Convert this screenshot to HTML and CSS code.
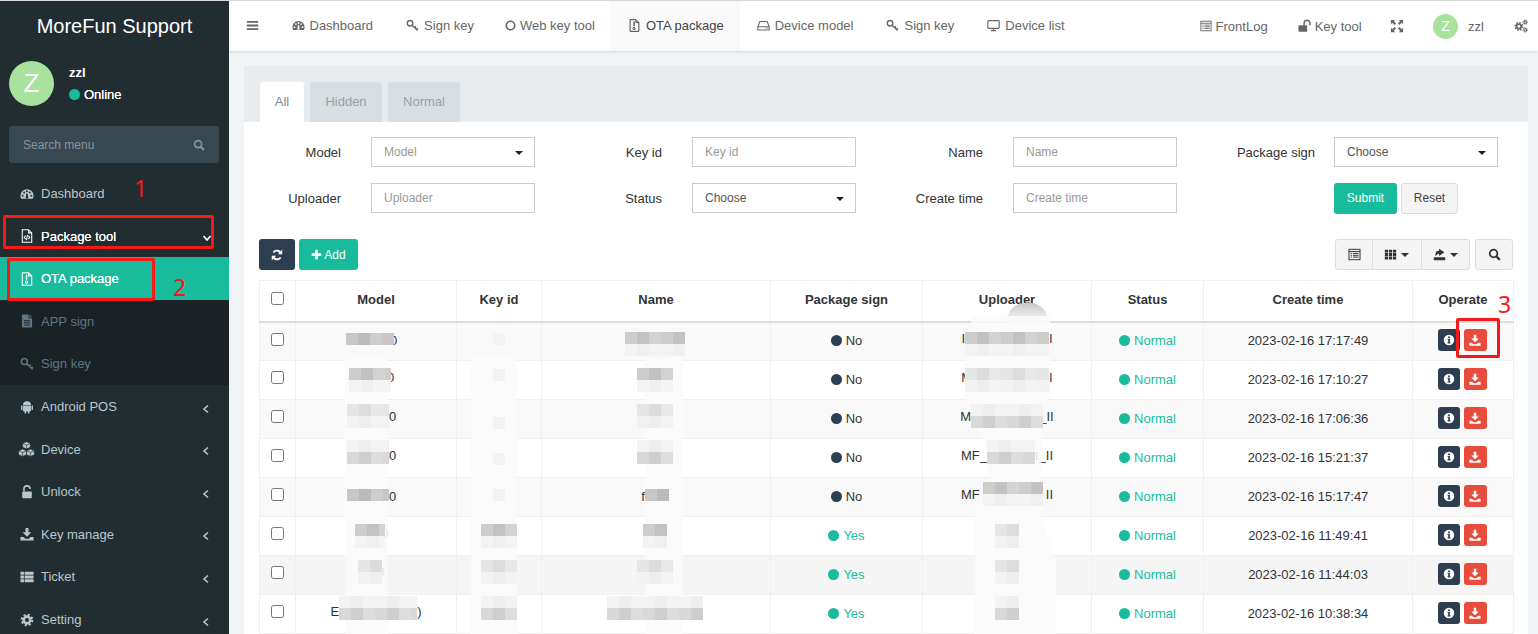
FILE: index.html
```html
<!DOCTYPE html>
<html lang="en">
<head>
    <meta charset="UTF-8">
    <title>OTA package - MoreFun Support</title>
    <link rel="stylesheet" href="styles.css">
</head>
<body>
    <svg class="sprite" xmlns="http://www.w3.org/2000/svg">
        <symbol id="i-bars" viewBox="0 0 16 16"><path d="M1 2.5h14v2.2H1zM1 6.9h14v2.2H1zM1 11.3h14v2.2H1z"/></symbol>
        <symbol id="i-dash" viewBox="0 0 16 16"><path fill-rule="evenodd" d="M8 2.5A7.5 7.5 0 0 0 .5 10c0 1.4.4 2.6 1 3.5h13c.6-.9 1-2.1 1-3.5A7.5 7.5 0 0 0 8 2.5zM3 8.9a1.1 1.1 0 1 0 0 2.2 1.1 1.1 0 1 0 0-2.2zM4.8 5.1a1.1 1.1 0 1 0 0 2.2 1.1 1.1 0 1 0 0-2.2zM8 3.8A1.1 1.1 0 1 0 8 6a1.1 1.1 0 1 0 0-2.2zM11.2 5.1a1.1 1.1 0 1 0 0 2.2 1.1 1.1 0 1 0 0-2.2zM13 8.9a1.1 1.1 0 1 0 0 2.2 1.1 1.1 0 1 0 0-2.2zM7.2 7.5L6.8 11a1.4 1.4 0 1 0 2.4 0l-.5-3.5z"/></symbol>
        <symbol id="i-key" viewBox="0 0 16 16"><g fill="none" stroke="currentColor" stroke-width="1.7"><circle cx="5" cy="5.2" r="3.4"/><path d="M7.4 7.6l7 6.4M10.6 10.6l1.9-1.7M13 12.8l1.6-1.4"/></g></symbol>
        <symbol id="i-circle" viewBox="0 0 16 16"><circle cx="8" cy="8" r="6.2" fill="none" stroke="currentColor" stroke-width="2.4"/></symbol>
        <symbol id="i-file-ota" viewBox="0 0 16 16"><g fill="none" stroke="currentColor" stroke-width="1.2"><path d="M2.6.8h7.2l3.6 3.6v10.8H2.6zM9.8.8v3.6h3.6"/><path d="M7.5 3v6" stroke-width="1.6"/><circle cx="7.5" cy="11.6" r="1.4"/></g></symbol>
        <symbol id="i-file-code" viewBox="0 0 16 16"><g fill="none" stroke="currentColor" stroke-width="1.2"><path d="M2.6.8h7.2l3.6 3.6v10.8H2.6zM9.8.8v3.6h3.6"/><path d="M6.4 7.6L4.8 9.6l1.6 2M9.6 7.6l1.6 2-1.6 2M8.6 6.8l-1.2 5.8"/></g></symbol>
        <symbol id="i-file-text" viewBox="0 0 16 16"><path fill-rule="evenodd" d="M2.2.5h7.600v4.300h4v10.700H2.200zM10.800.7l2.800 3H10.800zM4.500 7v1.200h7V7zM4.500 9.500v1.200h7V9.500zM4.500 12v1.200h7V12z"/></symbol>
        <symbol id="i-hdd" viewBox="0 0 16 16"><g fill="none" stroke="currentColor" stroke-width="1.3"><path d="M1 9.500L3.500 3h9L15 9.500V13.500H1zM1 9.500h14"/><path d="M10.500 11.500h1M12.800 11.500h1"/></g></symbol>
        <symbol id="i-desktop" viewBox="0 0 16 16"><g fill="none" stroke="currentColor" stroke-width="1.4"><rect x="1" y="2" width="14" height="9.500" rx="1"/><path d="M8 11.500V14M4.800 14.300h6.400"/></g></symbol>
        <symbol id="i-log" viewBox="0 0 16 16"><g fill="none" stroke="currentColor" stroke-width="1.2"><rect x="1.200" y="1.600" width="13.600" height="12.800"/><path d="M1.200 4.400h13.600M3.200 6.800h1.600M6 6.800h7M3.200 9h1.600M6 9h7M3.200 11.200h1.600M6 11.200h7"/></g></symbol>
        <symbol id="i-unlock" viewBox="0 0 16 16"><rect x="0.500" y="7" width="10" height="7.500" rx="1"/><path d="M7 7.500V4.700a3.300 3.300 0 0 1 6.600 0V7" fill="none" stroke="currentColor" stroke-width="1.700"/></symbol>
        <symbol id="i-lock-open" viewBox="0 0 16 16"><rect x="2.500" y="7.500" width="11" height="7.500" rx="1"/><path d="M4.500 7.500V4.500a3.500 3.500 0 0 1 7 0" fill="none" stroke="currentColor" stroke-width="1.800"/></symbol>
        <symbol id="i-expand" viewBox="0 0 16 16"><path d="M1 1h5L4.400 2.600 6.900 5.100 5.100 6.900 2.600 4.400 1 6zM15 1v5L13.400 4.400 10.900 6.900 9.100 5.100 11.600 2.600 10 1zM1 15v-5l1.600 1.600 2.500-2.500 1.800 1.800-2.500 2.500L6 15zM15 15h-5l1.600-1.600-2.500-2.500 1.800-1.800 2.500 2.500L15 10z"/></symbol>
        <symbol id="i-cog" viewBox="0 0 16 16"><g fill="none" stroke="currentColor"><circle cx="8" cy="8" r="3.800" stroke-width="3"/><circle cx="8" cy="8" r="6" stroke-width="2.400" stroke-dasharray="2.400 2.310"/></g></symbol>
        <symbol id="i-cogs" viewBox="0 0 16 16"><g fill="none" stroke="currentColor"><circle cx="5.500" cy="8.500" r="2.600" stroke-width="2"/><circle cx="5.500" cy="8.500" r="4.300" stroke-width="1.800" stroke-dasharray="1.700 1.670"/><circle cx="12.800" cy="3.600" r="1.500" stroke-width="1.300"/><circle cx="12.800" cy="3.600" r="2.600" stroke-width="1" stroke-dasharray="1 1.040"/><circle cx="12.800" cy="12.400" r="1.500" stroke-width="1.300"/><circle cx="12.800" cy="12.400" r="2.600" stroke-width="1" stroke-dasharray="1 1.040"/></g></symbol>
        <symbol id="i-android" viewBox="0 0 16 16"><path d="M3.500 6.300h9V12a1 1 0 0 1-1 1h-.8v2.300H9V13H7v2.300H5.300V13h-.8a1 1 0 0 1-1-1zM3.500 5.600a4.500 4.300 0 0 1 9 0zM1.200 6.300h1.600v5H1.200zM13.200 6.300h1.600v5h-1.600z"/></symbol>
        <symbol id="i-cubes" viewBox="0 0 16 16"><g stroke="#222d32" stroke-width=".6"><path d="M8 .6l3.600 1.600v3.700L8 7.500 4.400 5.900V2.200z"/><path d="M4.300 7.600l3.600 1.600v3.700l-3.600 1.600L.6 12.900V9.200z"/><path d="M11.700 7.600l3.700 1.600v3.700l-3.700 1.600-3.600-1.600V9.200z"/><path d="M4.400 2.200L8 3.800l3.600-1.600M8 3.800v3.700M.6 9.200l3.700 1.600 3.600-1.600M4.300 10.800v3.700M8.100 9.200l3.600 1.600 3.700-1.600M11.700 10.800v3.700" fill="none"/></g></symbol>
        <symbol id="i-download" viewBox="0 0 16 16"><path d="M6.300 1h3.400v5H13l-5 5-5-5h3.300zM.5 11.500H4l2 2h4l2-2h3.500v4H.5z"/></symbol>
        <symbol id="i-th-list" viewBox="0 0 16 16"><path d="M.5 2h4v3.400h-4zM5.300 2h10.200v3.400H5.300zM.5 6.300h4v3.400h-4zM5.300 6.300h10.200v3.400H5.300zM.5 10.600h4V14h-4zM5.300 10.600h10.200V14H5.300z"/></symbol>
        <symbol id="i-search" viewBox="0 0 16 16"><g fill="none" stroke="currentColor"><circle cx="6.800" cy="6.800" r="4.700" stroke-width="2.200"/><path d="M10.300 10.300l4.300 4.300" stroke-width="2.700"/></g></symbol>
        <symbol id="i-refresh" viewBox="0 0 16 16"><path d="M13.500 6.500A5.800 5.800 0 0 0 3.200 4.600M2.500 9.500a5.800 5.800 0 0 0 10.300 1.900" fill="none" stroke="currentColor" stroke-width="2.600"/><path d="M15 1v6H9zM1 15V9h6z"/></symbol>
        <symbol id="i-plus" viewBox="0 0 16 16"><path d="M6 1h4v5h5v4h-5v5H6v-5H1V6h5z"/></symbol>
        <symbol id="i-info" viewBox="0 0 16 16"><path fill-rule="evenodd" d="M8 1a7 7 0 1 0 0 14A7 7 0 0 0 8 1zM6.800 3.200h2.400v2.200H6.800zM5.900 6.400h3.300v5h1v1.400H5.900v-1.400h1V7.800h-1z"/></symbol>
        <symbol id="i-th" viewBox="0 0 16 16"><path d="M1 2h4v3.400H1zM6 2h4v3.400H6zM11 2h4v3.400h-4zM1 6.300h4v3.400H1zM6 6.300h4v3.400H6zM11 6.300h4v3.400h-4zM1 10.600h4V14H1zM6 10.600h4V14H6zM11 10.600h4V14h-4z"/></symbol>
        <symbol id="i-export" viewBox="0 0 16 16"><path d="M1 11.500h14v3.500H1zM3 10.500V7.500c0-2.500 1.800-4 4.500-4V.8L14 5.300 7.500 9.800V7C5.300 7 4.200 8.500 3 10.500z"/></symbol>
    </svg>

    <div class="topline"></div>
    <div class="layout">
        <aside class="sidebar">
            <div class="logo">MoreFun Support</div>
            <div class="user-panel">
                <div class="avatar avatar-big">Z</div>
                <div class="user-info">
                    <div class="user-name">zzl</div>
                    <div class="user-status"><span class="dot dot-green"></span>Online</div>
                </div>
            </div>
            <div class="side-search">
                <span>Search menu</span>
                <svg class="icon"><use href="#i-search"/></svg>
            </div>
            <ul class="side-menu">
                <li class="side-item"><svg class="icon"><use href="#i-dash"/></svg>Dashboard</li>
                <li class="side-item is-open"><svg class="icon"><use href="#i-file-code"/></svg>Package tool
                    <svg class="chev chev-down" viewBox="0 0 10 10"><path d="M1.500 3l3.500 4 3.500-4"/></svg></li>
                <li class="side-item is-active"><svg class="icon"><use href="#i-file-ota"/></svg>OTA package</li>
                <li class="side-item is-sub"><svg class="icon"><use href="#i-file-text"/></svg>APP sign</li>
                <li class="side-item is-sub"><svg class="icon"><use href="#i-key"/></svg>Sign key</li>
                <li class="side-item"><svg class="icon"><use href="#i-android"/></svg>Android POS
                    <svg class="chev" viewBox="0 0 10 10"><path d="M7 1.500L3 5l4 3.500"/></svg></li>
                <li class="side-item"><svg class="icon icon-wide"><use href="#i-cubes"/></svg>Device
                    <svg class="chev" viewBox="0 0 10 10"><path d="M7 1.500L3 5l4 3.500"/></svg></li>
                <li class="side-item"><svg class="icon"><use href="#i-lock-open"/></svg>Unlock
                    <svg class="chev" viewBox="0 0 10 10"><path d="M7 1.500L3 5l4 3.500"/></svg></li>
                <li class="side-item"><svg class="icon"><use href="#i-download"/></svg>Key manage
                    <svg class="chev" viewBox="0 0 10 10"><path d="M7 1.500L3 5l4 3.500"/></svg></li>
                <li class="side-item"><svg class="icon"><use href="#i-th-list"/></svg>Ticket
                    <svg class="chev" viewBox="0 0 10 10"><path d="M7 1.500L3 5l4 3.500"/></svg></li>
                <li class="side-item"><svg class="icon"><use href="#i-cog"/></svg>Setting
                    <svg class="chev" viewBox="0 0 10 10"><path d="M7 1.500L3 5l4 3.500"/></svg></li>
            </ul>
        </aside>

        <main class="main">
            <nav class="navbar">
                <a class="nav-toggle"><svg class="icon"><use href="#i-bars"/></svg></a>
                <a class="nav-link"><svg class="icon"><use href="#i-dash"/></svg>Dashboard</a>
                <a class="nav-link"><svg class="icon"><use href="#i-key"/></svg>Sign key</a>
                <a class="nav-link nav-circle"><svg class="icon"><use href="#i-circle"/></svg>Web key tool</a>
                <a class="nav-link is-current"><svg class="icon"><use href="#i-file-ota"/></svg>OTA package</a>
                <a class="nav-link"><svg class="icon"><use href="#i-hdd"/></svg>Device model</a>
                <a class="nav-link"><svg class="icon"><use href="#i-key"/></svg>Sign key</a>
                <a class="nav-link"><svg class="icon"><use href="#i-desktop"/></svg>Device list</a>
                <div class="nav-right">
                    <a class="nav-link nav-log"><svg class="icon"><use href="#i-log"/></svg>FrontLog</a>
                    <a class="nav-link nav-keytool"><svg class="icon"><use href="#i-unlock"/></svg>Key tool</a>
                    <a class="nav-link nav-expand"><svg class="icon"><use href="#i-expand"/></svg></a>
                    <a class="nav-link nav-user"><span class="avatar avatar-small">Z</span>zzl</a>
                    <a class="nav-link nav-cogs"><svg class="icon"><use href="#i-cogs"/></svg></a>
                </div>
            </nav>

            <section class="content">
                <div class="panel">
                    <ul class="tabs">
                        <li class="tab is-active">All</li>
                        <li class="tab">Hidden</li>
                        <li class="tab">Normal</li>
                    </ul>
                    <div class="panel-body">
                        <form class="filter">
                            <label>Model</label>
                            <div class="select-box is-empty">Model</div>
                            <label>Key id</label>
                            <input type="text" placeholder="Key id">
                            <label>Name</label>
                            <input type="text" placeholder="Name">
                            <label class="label-last">Package sign</label>
                            <div class="select-box">Choose</div>

                            <label>Uploader</label>
                            <input type="text" placeholder="Uploader">
                            <label>Status</label>
                            <div class="select-box">Choose</div>
                            <label>Create time</label>
                            <input type="text" placeholder="Create time">
                            <span></span>
                            <div class="filter-btns">
                                <button type="button" class="btn btn-teal">Submit</button>
                                <button type="button" class="btn btn-light">Reset</button>
                            </div>
                        </form>

                        <div class="toolbar">
                            <button type="button" class="btn btn-navy btn-refresh"><svg class="icon"><use href="#i-refresh"/></svg></button>
                            <button type="button" class="btn btn-teal btn-add"><svg class="icon"><use href="#i-plus"/></svg>Add</button>
                            <div class="tool-right">
                                <div class="btn-group">
                                    <button type="button" class="btn btn-light tool-a"><svg class="icon"><use href="#i-log"/></svg></button>
                                    <button type="button" class="btn btn-light tool-b"><svg class="icon"><use href="#i-th"/></svg><span class="caret"></span></button>
                                    <button type="button" class="btn btn-light tool-b"><svg class="icon"><use href="#i-export"/></svg><span class="caret"></span></button>
                                </div>
                                <button type="button" class="btn btn-light tool-search"><svg class="icon"><use href="#i-search"/></svg></button>
                            </div>
                        </div>

                        <div class="table-wrap">
                            <table class="data-table">
                                <thead>
                                    <tr>
                                        <th><input type="checkbox"></th>
                                        <th>Model</th>
                                        <th>Key id</th>
                                        <th>Name</th>
                                        <th>Package sign</th>
                                        <th>Uploader</th>
                                        <th>Status</th>
                                        <th>Create time</th>
                                        <th>Operate</th>
                                    </tr>
                                </thead>
                                <tbody>
                                    <tr>
                                        <td><input type="checkbox"></td>
                                        <td class="td-model"><span class="mz dark w48 cover"></span>0</td>
                                        <td><span class="mz faint w12"></span></td>
                                        <td class="td-name"><span class="mz top w60"></span></td>
                                        <td><span class="dot dot-navy"></span>No</td>
                                        <td>I<span class="mz top w84"></span>I</td>
                                        <td class="is-ok"><span class="dot dot-green"></span>Normal</td>
                                        <td>2023-02-16 17:17:49</td>
                                        <td class="td-ops"><a class="op op-navy"><svg class="icon"><use href="#i-info"/></svg></a><a class="op op-red"><svg class="icon"><use href="#i-download"/></svg></a></td>
                                    </tr>
                                    <tr>
                                        <td><input type="checkbox"></td>
                                        <td class="td-model"><span class="mz top w42 cover"></span>0</td>
                                        <td><span class="mz faint w12"></span></td>
                                        <td class="td-name"><span class="mz top w36"></span></td>
                                        <td><span class="dot dot-navy"></span>No</td>
                                        <td>M<span class="mz light lap w84"></span>I</td>
                                        <td class="is-ok"><span class="dot dot-green"></span>Normal</td>
                                        <td>2023-02-16 17:10:27</td>
                                        <td class="td-ops"><a class="op op-navy"><svg class="icon"><use href="#i-info"/></svg></a><a class="op op-red"><svg class="icon"><use href="#i-download"/></svg></a></td>
                                    </tr>
                                    <tr>
                                        <td><input type="checkbox"></td>
                                        <td class="td-model"><span class="mz light w42"></span>0</td>
                                        <td><span class="mz faint w12"></span></td>
                                        <td class="td-name"><span class="mz light w36"></span></td>
                                        <td><span class="dot dot-navy"></span>No</td>
                                        <td>M<span class="mz low w72 cover"></span>_II</td>
                                        <td class="is-ok"><span class="dot dot-green"></span>Normal</td>
                                        <td>2023-02-16 17:06:36</td>
                                        <td class="td-ops"><a class="op op-navy"><svg class="icon"><use href="#i-info"/></svg></a><a class="op op-red"><svg class="icon"><use href="#i-download"/></svg></a></td>
                                    </tr>
                                    <tr>
                                        <td><input type="checkbox"></td>
                                        <td class="td-model"><span class="mz low w42"></span>0</td>
                                        <td><span class="mz faint w12"></span></td>
                                        <td class="td-name"><span class="mz low w36"></span></td>
                                        <td><span class="dot dot-navy"></span>No</td>
                                        <td>MF_<span class="mz low w48"></span>t_II</td>
                                        <td class="is-ok"><span class="dot dot-green"></span>Normal</td>
                                        <td>2023-02-16 15:21:37</td>
                                        <td class="td-ops"><a class="op op-navy"><svg class="icon"><use href="#i-info"/></svg></a><a class="op op-red"><svg class="icon"><use href="#i-download"/></svg></a></td>
                                    </tr>
                                    <tr>
                                        <td><input type="checkbox"></td>
                                        <td class="td-model"><span class="mz dark w42"></span>0</td>
                                        <td><span class="mz faint w12"></span></td>
                                        <td class="td-name">f<span class="mz dark w24"></span></td>
                                        <td><span class="dot dot-navy"></span>No</td>
                                        <td>MF<span class="mz top w60 gap"></span>II</td>
                                        <td class="is-ok"><span class="dot dot-green"></span>Normal</td>
                                        <td>2023-02-16 15:17:47</td>
                                        <td class="td-ops"><a class="op op-navy"><svg class="icon"><use href="#i-info"/></svg></a><a class="op op-red"><svg class="icon"><use href="#i-download"/></svg></a></td>
                                    </tr>
                                    <tr>
                                        <td><input type="checkbox"></td>
                                        <td class="td-model"><span class="mz top w30 cover"></span>0</td>
                                        <td><span class="mz top w36"></span></td>
                                        <td class="td-name"><span class="mz top w24"></span></td>
                                        <td class="is-ok"><span class="dot dot-green"></span>Yes</td>
                                        <td><span class="mz light w24"></span></td>
                                        <td class="is-ok"><span class="dot dot-green"></span>Normal</td>
                                        <td>2023-02-16 11:49:41</td>
                                        <td class="td-ops"><a class="op op-navy"><svg class="icon"><use href="#i-info"/></svg></a><a class="op op-red"><svg class="icon"><use href="#i-download"/></svg></a></td>
                                    </tr>
                                    <tr class="is-hover">
                                        <td><input type="checkbox"></td>
                                        <td class="td-model"><span class="mz light w24 cover"></span>J</td>
                                        <td><span class="mz light w36"></span></td>
                                        <td class="td-name"><span class="mz light w36"></span></td>
                                        <td class="is-ok"><span class="dot dot-green"></span>Yes</td>
                                        <td><span class="mz light w24"></span></td>
                                        <td class="is-ok"><span class="dot dot-green"></span>Normal</td>
                                        <td>2023-02-16 11:44:03</td>
                                        <td class="td-ops"><a class="op op-navy"><svg class="icon"><use href="#i-info"/></svg></a><a class="op op-red"><svg class="icon"><use href="#i-download"/></svg></a></td>
                                    </tr>
                                    <tr>
                                        <td><input type="checkbox"></td>
                                        <td class="td-wide">E<span class="mz low w78"></span>)</td>
                                        <td><span class="mz low w36"></span></td>
                                        <td class="td-name"><span class="mz low w96"></span></td>
                                        <td class="is-ok"><span class="dot dot-green"></span>Yes</td>
                                        <td><span class="mz low w24"></span></td>
                                        <td class="is-ok"><span class="dot dot-green"></span>Normal</td>
                                        <td>2023-02-16 10:38:34</td>
                                        <td class="td-ops"><a class="op op-navy"><svg class="icon"><use href="#i-info"/></svg></a><a class="op op-red"><svg class="icon"><use href="#i-download"/></svg></a></td>
                                    </tr>
                                </tbody>
                            </table>
                            <div class="smudge smudge-cap"></div>
                            <div class="smudge smudge-uploader"></div>
                            <div class="smudge smudge-model"></div>
                            <div class="smudge smudge-key"></div>
                            <div class="smudge smudge-name"></div>
                        </div>
                    </div>
                </div>
            </section>
        </main>
    </div>

    <!-- red marks drawn over the screenshot -->
    <div class="mark mark-box mark-box-1"></div>
    <div class="mark mark-box mark-box-2"></div>
    <div class="mark mark-box mark-box-3"></div>
    <div class="mark mark-num mark-num-1">1</div>
    <div class="mark mark-num mark-num-2">2</div>
    <div class="mark mark-num mark-num-3">3</div>
</body>
</html>
```

FILE: styles.css
```css
:root {
    --teal: #18bc9c;
    --navy: #2c3e50;
    --red: #e74c3c;
    --side-bg: #222d32;
    --side-dark: #1a2226;
    --side-text: #b8c7ce;
    --line: #f0f0f0;
    --mark: #f5191a;
}

* {
    box-sizing: border-box;
    margin: 0;
    padding: 0;
}

html,
body {
    height: 100%;
    overflow: hidden;
}

body {
    position: relative;
    display: flex;
    flex-direction: column;
    font-family: "Liberation Sans", Arial, sans-serif;
    font-size: 13px;
    color: #333;
    background: #f0f4f7;
}

ul {
    list-style: none;
}

.sprite {
    display: none;
}

.icon {
    width: 14px;
    height: 14px;
    fill: currentColor;
    flex: none;
}

.topline {
    height: 1px;
    background: #d9d9d9;
    flex: none;
}

.layout {
    display: flex;
    flex: 1;
    min-height: 0;
}

/* sidebar */
.sidebar {
    width: 229px;
    flex: none;
    background: var(--side-bg);
    color: var(--side-text);
    overflow: hidden;
}

.logo {
    height: 50px;
    line-height: 50px;
    text-align: center;
    font-size: 20px;
    color: #fff;
}

.user-panel {
    display: flex;
    align-items: center;
    padding: 10px 0 0 9px;
}

.avatar {
    display: flex;
    align-items: center;
    justify-content: center;
    border-radius: 50%;
    background: #a8e29d;
    color: #fff;
    flex: none;
}

.avatar-big {
    width: 45px;
    height: 45px;
    font-size: 26px;
}

.avatar-small {
    width: 25px;
    height: 25px;
    font-size: 14px;
    margin-right: 10px;
}

.user-info {
    margin-left: 15px;
    color: #fff;
}

.user-name {
    font-weight: bold;
    margin-bottom: 7px;
    margin-top: -1px;
}

.user-status {
    display: flex;
    align-items: center;
    text-shadow: 0 0 .5px #fff;
}

.dot {
    display: inline-block;
    width: 11px;
    height: 11px;
    border-radius: 50%;
    margin-right: 4px;
    vertical-align: -1px;
}

.dot-green {
    background: var(--teal);
}

.dot-navy {
    background: var(--navy);
}

.side-search {
    display: flex;
    align-items: center;
    justify-content: space-between;
    height: 37px;
    margin: 20px 10px 0 9px;
    padding: 0 14px;
    background: #374850;
    border-radius: 3px;
    color: #88949b;
    font-size: 12px;
}

.side-search .icon {
    width: 12px;
    height: 12px;
}

.side-menu {
    margin-top: 9.3px;
}

.side-item {
    display: flex;
    align-items: center;
    height: 42.6px;
    padding-left: 20px;
}

.side-item .icon {
    margin-right: 7px;
}

.side-item .icon-wide {
    width: 17px;
    height: 17px;
    margin-left: -2px;
    margin-right: 6px;
}

.side-item.is-open {
    color: #fff;
    text-shadow: 0 0 .6px #fff;
}

.side-item.is-active {
    background: var(--teal);
    color: #fff;
    text-shadow: 0 0 .6px #fff;
}

.side-item.is-sub {
    background: var(--side-dark);
    color: #5f7582;
}

.chev {
    width: 10px;
    height: 10px;
    margin-left: auto;
    margin-right: 18px;
    margin-top: 4px;
    fill: none;
    stroke: currentColor;
    stroke-width: 1.6;
}

.chev-down {
    margin-right: 17px;
}

/* top navbar */
.main {
    flex: 1;
    min-width: 0;
    display: flex;
    flex-direction: column;
}

.navbar {
    display: flex;
    align-items: stretch;
    height: 50px;
    flex: none;
    background: #fff;
    box-shadow: 0 1px 2px rgba(0, 0, 0, .12);
    color: #666;
    position: relative;
}

.navbar a {
    display: flex;
    align-items: center;
}

.nav-toggle {
    width: 46px;
    padding: 0 0 2px 17px;
}

.nav-toggle .icon {
    width: 13px;
    height: 13px;
}

.nav-link {
    padding: 0 16.5px 2px;
}

.nav-link .icon {
    width: 13px;
    height: 13px;
    margin-right: 5px;
}

.nav-circle {
    padding-left: 14.5px;
}

.nav-circle .icon {
    width: 11px;
    height: 11px;
    margin-right: 4px;
}

.nav-link.is-current {
    background: #f9f9f9;
    color: #444;
}

.nav-right {
    display: flex;
    margin-left: auto;
}

.nav-right .nav-link {
    padding-bottom: 0;
}

.nav-log {
    padding: 0 15px;
}

.nav-log .icon {
    width: 12px;
    height: 12px;
    margin-right: 4px;
}

.nav-keytool {
    padding: 0 15.5px 0 15px;
}

.nav-keytool .icon {
    width: 14px;
    height: 14px;
    margin-right: 3px;
}

.nav-expand {
    padding: 0 14px 0 13px;
}

.nav-expand .icon,
.nav-cogs .icon {
    margin-right: 0;
}

.nav-right .nav-expand .icon,
.nav-right .nav-cogs .icon {
    width: 14px;
    height: 14px;
}

.nav-user {
    padding: 0 15px;
}

.nav-right .nav-cogs {
    padding: 0 10px 0 15px;
}

/* content */
.content {
    flex: 1;
    min-height: 0;
    padding: 15px 10px 0 15px;
}

.panel {
    background: #fff;
    height: 100%;
}

.tabs {
    display: flex;
    gap: 6px;
    height: 56px;
    padding: 16px 0 0 16px;
    background: #e8ecef;
}

.tab {
    width: 72px;
    line-height: 40px;
    text-align: center;
    color: #9aa0a4;
    background: #d8dfe4;
    border-radius: 3px 3px 0 0;
}

.tab.is-active {
    width: 44px;
    background: #fff;
    color: #7b8a94;
}

.panel-body {
    padding: 15px;
}

.filter {
    display: grid;
    grid-template-columns: 112px 164px 157px 164px 157px 164px 157px 164px;
    grid-auto-rows: 30px;
    row-gap: 16px;
    align-items: center;
}

.filter label {
    text-align: right;
    padding-right: 30px;
}

.filter .label-last {
    padding-right: 19px;
}

.filter input[type="text"],
.select-box {
    width: 100%;
    height: 30px;
    padding: 0 12px;
    border: 1px solid #ccc;
    font-family: inherit;
    font-size: 12px;
    color: #555;
    line-height: 28px;
    background: #fff;
    outline: none;
}

.filter input::placeholder {
    color: #999;
}

.select-box {
    position: relative;
}

.select-box.is-empty {
    color: #999;
}

.select-box::after {
    content: '';
    position: absolute;
    right: 11px;
    top: 13px;
    border-top: 4px solid #222;
    border-left: 4px solid transparent;
    border-right: 4px solid transparent;
}

.filter-btns {
    display: flex;
    gap: 4px;
}

.btn {
    display: inline-flex;
    align-items: center;
    justify-content: center;
    height: 31px;
    border: 0;
    border-radius: 3px;
    font-family: inherit;
    font-size: 12px;
}

.btn-teal {
    background: var(--teal);
    color: #fff;
}

.btn-navy {
    background: var(--navy);
    color: #fff;
}

.btn-light {
    background: #f4f4f4;
    border: 1px solid #ddd;
    color: #444;
}

.filter-btns .btn-teal {
    width: 63px;
}

.filter-btns .btn-light {
    width: 57px;
}

.toolbar {
    display: flex;
    gap: 4px;
    margin-top: 26px;
}

.btn-refresh {
    width: 36px;
}

.btn-add {
    width: 59px;
}

.btn-refresh .icon {
    width: 12px;
    height: 12px;
}

.btn-add .icon {
    width: 11px;
    height: 11px;
    margin-right: 2px;
}

.tool-right {
    display: flex;
    gap: 5px;
    margin-left: auto;
    color: #333;
}

.btn-group {
    display: flex;
}

.btn-group .btn {
    border-radius: 0;
    margin-left: -1px;
    color: #333;
}

.btn-group .btn:first-child {
    border-radius: 3px 0 0 3px;
    margin-left: 0;
}

.btn-group .btn:last-child {
    border-radius: 0 3px 3px 0;
}

.tool-a {
    width: 38px;
}

.tool-b {
    width: 49.5px;
}

.tool-search {
    width: 38px;
    color: #333;
}

.tool-right .icon {
    width: 13px;
    height: 13px;
}

.caret {
    margin-left: 4px;
    border-top: 4px solid #333;
    border-left: 4px solid transparent;
    border-right: 4px solid transparent;
}

/* table */
.table-wrap {
    position: relative;
    margin-top: 10px;
}

.data-table {
    width: 1254px;
    table-layout: fixed;
    border-collapse: collapse;
    border: 1px solid var(--line);
}

.data-table th,
.data-table td {
    border: 1px solid var(--line);
    text-align: center;
    vertical-align: middle;
    white-space: nowrap;
    overflow: hidden;
}

.data-table th {
    height: 41px;
    padding-bottom: 2px;
    border-bottom: 2px solid #ddd;
}

.data-table td {
    height: 39px;
    padding: 0 0 2px;
}

.data-table th:nth-child(1) { width: 36px; }
.data-table th:nth-child(2) { width: 161px; }
.data-table th:nth-child(3) { width: 85px; }
.data-table th:nth-child(4) { width: 229px; }
.data-table th:nth-child(5) { width: 152px; }
.data-table th:nth-child(6) { width: 169px; }
.data-table th:nth-child(7) { width: 112px; }
.data-table th:nth-child(8) { width: 209px; }
.data-table th:nth-child(9) { width: 101px; }

.data-table input[type="checkbox"] {
    width: 13px;
    height: 13px;
    margin: 0 0 3px;
    vertical-align: middle;
}

.data-table tbody tr:nth-child(odd) {
    background: #f9f9f9;
}

.data-table tbody tr.is-hover {
    background: #f5f5f5;
}

.data-table td.td-model {
    padding-right: 9px;
}

.data-table td.td-name {
    padding-right: 2px;
}

.data-table td.td-ops {
    padding-right: 2px;
    font-size: 0;
}

.is-ok {
    color: var(--teal);
}

.op {
    display: inline-flex;
    align-items: center;
    justify-content: center;
    width: 22px;
    height: 22px;
    border-radius: 3px;
    color: #fff;
    vertical-align: middle;
}

.op .icon {
    width: 12px;
    height: 12px;
}

.op + .op {
    width: 23px;
    margin-left: 4px;
}

.op-navy {
    background: var(--navy);
}

.op-red {
    background: var(--red);
}

/* pixelated blur over the hidden values */
.mz {
    position: relative;
    z-index: 2;
    display: inline-block;
    vertical-align: middle;
    height: 12px;
    background-size: 36px 12px;
    background-repeat: repeat-x;
}

.mz.dark {
    background-image: linear-gradient(90deg, #c9c6c5 0 12px, #bdbabc 12px 24px, #cfcecf 24px 36px);
}

.mz.faint {
    background: #f3f3f3;
}

.mz.light {
    height: 24px;
    background-image:
        linear-gradient(90deg, #e4e5e5 0 12px, #dcdcdc 12px 24px, #e8e8e9 24px 36px),
        linear-gradient(90deg, #f2f2f2 0 12px, #eeeeee 12px 24px, #f3f3f3 24px 36px);
    background-position: 0 0, 0 12px;
}

.mz.top {
    height: 24px;
    background-image:
        linear-gradient(90deg, #cfcdcc 0 12px, #c3c1c3 12px 24px, #d3d3d4 24px 36px),
        linear-gradient(90deg, #f3f3f2 0 12px, #efefef 12px 24px, #f4f4f4 24px 36px);
    background-position: 0 0, 0 12px;
}

.mz.low {
    height: 24px;
    background-image:
        linear-gradient(90deg, #f3f3f2 0 12px, #eeeeee 12px 24px, #f3f3f3 24px 36px),
        linear-gradient(90deg, #d9d8d7 0 12px, #cfcdce 12px 24px, #dddddd 24px 36px);
    background-position: 0 0, 0 12px;
}

/* the blur sits on a 12px grid, so each row has its own offset */
tbody tr:nth-child(1) .mz { top: 4px; }
tbody tr:nth-child(2) .mz { top: 1px; }
tbody tr:nth-child(3) .mz { top: -2px; }
tbody tr:nth-child(4) .mz { top: -5px; }
tbody tr:nth-child(5) .mz { top: -2px; }
tbody tr:nth-child(6) .mz { top: 1px; }
tbody tr:nth-child(7) .mz { top: -2px; }
tbody tr:nth-child(8) .mz { top: -5px; }

tbody tr:nth-child(1) .mz.dark,
tbody tr:nth-child(1) .mz.faint { top: -2px; }
tbody tr:nth-child(2) .mz.faint { top: -5px; }
tbody tr:nth-child(3) .mz.faint { top: 4px; }
tbody tr:nth-child(4) .mz.faint { top: 1px; }

.mz.lap {
    margin-left: -7px;
}

.mz.cover {
    margin-right: -4px;
}

.mz.gap {
    margin: 0 3px;
}

.data-table td.td-wide {
    padding: 0 0 2px;
}

.w12 { width: 12px; }
.w24 { width: 24px; }
.w30 { width: 30px; }
.w36 { width: 36px; }
.w42 { width: 42px; }
.w48 { width: 48px; }
.w60 { width: 60px; }
.w72 { width: 72px; }
.w78 { width: 78px; }
.w84 { width: 84px; }
.w96 { width: 96px; }

/* near-white brush strokes left by whoever hid the values */
.smudge {
    position: absolute;
    z-index: 1;
    background: rgba(251, 251, 251, .88);
}

.smudge-cap {
    left: 748px;
    top: 23px;
    width: 41px;
    height: 19px;
    background: linear-gradient(#c9c9c9, #f8f8f8);
    border-radius: 18px 18px 0 0;
}

.smudge-uploader {
    left: 701px;
    top: 36px;
    width: 100px;
    height: 320px;
    clip-path: polygon(12% 0, 5% 12%, 6% 27%, 25% 40%, 30% 54%, 15% 60%, 15% 100%, 96% 100%, 96% 76%, 80% 62%, 82% 36%, 84% 29%, 90% 24%, 90% 0);
}

.smudge-model {
    left: 86px;
    top: 78px;
    width: 43px;
    height: 278px;
}

.smudge-key {
    left: 212px;
    top: 78px;
    width: 46px;
    height: 278px;
}

.smudge-name {
    left: 386px;
    top: 78px;
    width: 38px;
    height: 278px;
}

/* red annotations */
.mark {
    position: absolute;
    z-index: 5;
}

.mark-box {
    border: 3px solid var(--mark);
    border-radius: 2px;
}

.mark-box-1 {
    left: 3px;
    top: 215px;
    width: 211px;
    height: 34px;
}

.mark-box-2 {
    left: 7px;
    top: 258px;
    width: 148px;
    height: 43px;
}

.mark-box-3 {
    left: 1456px;
    top: 318px;
    width: 44px;
    height: 40px;
}

.mark-num {
    font-family: "Noto Sans", sans-serif;
    font-size: 23px;
    line-height: 1;
    color: var(--mark);
}

.mark-num-1 {
    left: 134px;
    top: 177px;
}

.mark-num-2 {
    left: 173px;
    top: 276px;
}

.mark-num-3 {
    left: 1498px;
    top: 293px;
}
```
